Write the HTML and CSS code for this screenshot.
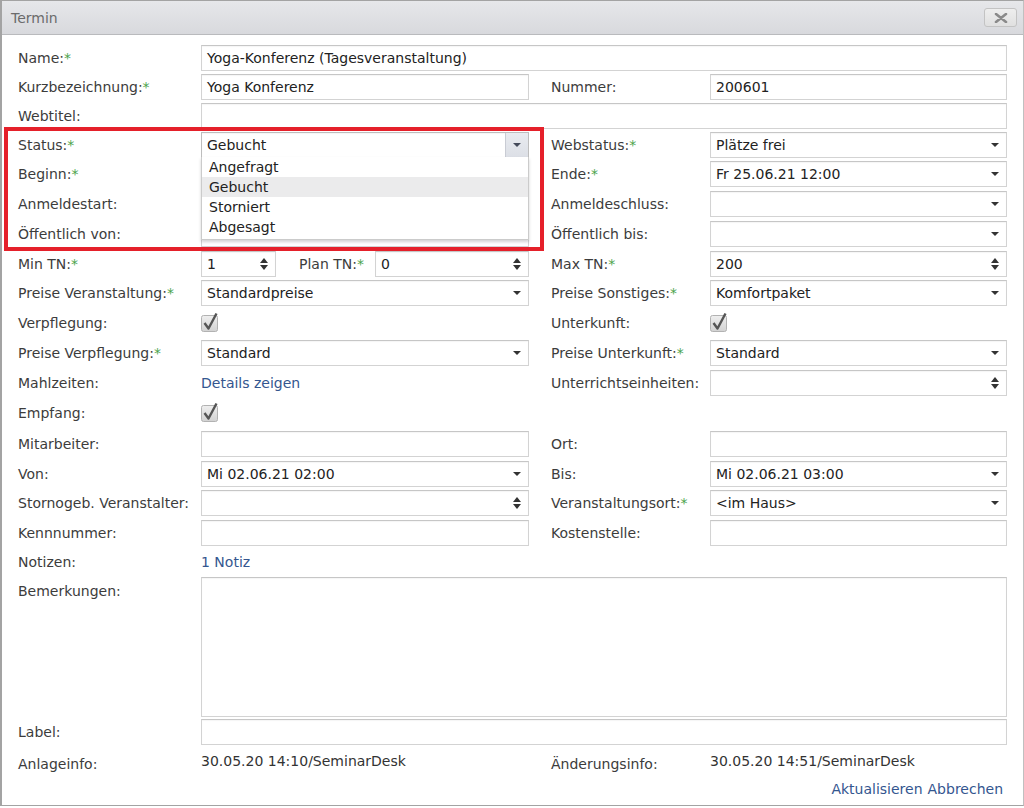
FILE: index.html
```html
<!DOCTYPE html>
<html lang="de">
<head>
<meta charset="utf-8">
<title>Termin</title>
<link rel="stylesheet" href="styles.css">
</head>
<body>
<div class="dialog">
  <div class="titlebar">
    <span class="title">Termin</span>
    <button class="close" type="button" aria-label="Schließen">
      <svg width="14" height="10" viewBox="0 0 14 10"><path d="M2 1 L12 9 M12 1 L2 9" stroke="#8a8a8a" stroke-width="2.6" stroke-linecap="round"/></svg>
    </button>
  </div>

  <div class="form">
    <!-- Name -->
    <div class="lbl">Name:<span class="req">*</span></div>
    <div class="fld span3"><div class="inp">Yoga-Konferenz (Tagesveranstaltung)</div></div>

    <!-- Kurzbezeichnung -->
    <div class="lbl">Kurzbezeichnung:<span class="req">*</span></div>
    <div class="fld"><div class="inp">Yoga Konferenz</div></div>
    <div class="lbl r">Nummer:</div>
    <div class="fld"><div class="inp">200601</div></div>

    <!-- Webtitel -->
    <div class="lbl">Webtitel:</div>
    <div class="fld span3"><div class="inp"></div></div>

    <!-- Status -->
    <div class="lbl">Status:<span class="req">*</span></div>
    <div class="fld status">
      <div class="inp sel open">Gebucht<span class="btn"><i class="arr"></i></span></div>
      <ul class="dropdown">
        <li>Angefragt</li>
        <li class="hover">Gebucht</li>
        <li>Storniert</li>
        <li>Abgesagt</li>
      </ul>
    </div>
    <div class="lbl r">Webstatus:<span class="req">*</span></div>
    <div class="fld"><div class="inp sel">Plätze frei<i class="arr"></i></div></div>

    <!-- Beginn -->
    <div class="lbl">Beginn:<span class="req">*</span></div>
    <div class="fld"><div class="inp sel"><i class="arr"></i></div></div>
    <div class="lbl r">Ende:<span class="req">*</span></div>
    <div class="fld"><div class="inp sel">Fr 25.06.21 12:00<i class="arr"></i></div></div>

    <!-- Anmeldestart -->
    <div class="lbl">Anmeldestart:</div>
    <div class="fld"><div class="inp sel"><i class="arr"></i></div></div>
    <div class="lbl r">Anmeldeschluss:</div>
    <div class="fld"><div class="inp sel"><i class="arr"></i></div></div>

    <!-- Öffentlich -->
    <div class="lbl">Öffentlich von:</div>
    <div class="fld"><div class="inp sel"><i class="arr"></i></div></div>
    <div class="lbl r">Öffentlich bis:</div>
    <div class="fld"><div class="inp sel"><i class="arr"></i></div></div>

    <!-- TN -->
    <div class="lbl">Min TN:<span class="req">*</span></div>
    <div class="fld tn">
      <div class="inp spin min">1<i class="spn"></i></div>
      <div class="sublbl">Plan TN:<span class="req">*</span></div>
      <div class="inp spin plan">0<i class="spn"></i></div>
    </div>
    <div class="lbl r">Max TN:<span class="req">*</span></div>
    <div class="fld"><div class="inp spin">200<i class="spn"></i></div></div>

    <!-- Preise -->
    <div class="lbl">Preise Veranstaltung:<span class="req">*</span></div>
    <div class="fld"><div class="inp sel">Standardpreise<i class="arr"></i></div></div>
    <div class="lbl r">Preise Sonstiges:<span class="req">*</span></div>
    <div class="fld"><div class="inp sel">Komfortpaket<i class="arr"></i></div></div>

    <!-- Verpflegung -->
    <div class="lbl">Verpflegung:</div>
    <div class="fld"><svg class="chk" width="18" height="20" viewBox="0 0 18 20"><defs><linearGradient id="cg1" x1="0" y1="0" x2="0" y2="1"><stop offset="0" stop-color="#efefef"/><stop offset="1" stop-color="#d2d2d2"/></linearGradient></defs><rect x="0.5" y="3.5" width="16" height="16" rx="2" fill="url(#cg1)" stroke="#b2b2b2"/><path d="M3.5 11 L7.5 16.5 L15.5 1.5" fill="none" stroke="#555" stroke-width="2.4" stroke-linejoin="round"/></svg></div>
    <div class="lbl r">Unterkunft:</div>
    <div class="fld"><svg class="chk" width="18" height="20" viewBox="0 0 18 20"><rect x="0.5" y="3.5" width="16" height="16" rx="2" fill="url(#cg1)" stroke="#b2b2b2"/><path d="M3.5 11 L7.5 16.5 L15.5 1.5" fill="none" stroke="#555" stroke-width="2.4" stroke-linejoin="round"/></svg></div>

    <!-- Preise Verpflegung -->
    <div class="lbl">Preise Verpflegung:<span class="req">*</span></div>
    <div class="fld"><div class="inp sel">Standard<i class="arr"></i></div></div>
    <div class="lbl r">Preise Unterkunft:<span class="req">*</span></div>
    <div class="fld"><div class="inp sel">Standard<i class="arr"></i></div></div>

    <!-- Mahlzeiten -->
    <div class="lbl">Mahlzeiten:</div>
    <div class="fld"><a class="link" href="#">Details zeigen</a></div>
    <div class="lbl r">Unterrichtseinheiten:</div>
    <div class="fld"><div class="inp spin"><i class="spn"></i></div></div>

    <!-- Empfang -->
    <div class="lbl">Empfang:</div>
    <div class="fld"><svg class="chk" width="18" height="20" viewBox="0 0 18 20"><rect x="0.5" y="3.5" width="16" height="16" rx="2" fill="url(#cg1)" stroke="#b2b2b2"/><path d="M3.5 11 L7.5 16.5 L15.5 1.5" fill="none" stroke="#555" stroke-width="2.4" stroke-linejoin="round"/></svg></div>
    <div></div><div></div>

    <!-- Mitarbeiter -->
    <div class="lbl">Mitarbeiter:</div>
    <div class="fld"><div class="inp"></div></div>
    <div class="lbl r">Ort:</div>
    <div class="fld"><div class="inp"></div></div>

    <!-- Von/Bis -->
    <div class="lbl">Von:</div>
    <div class="fld"><div class="inp sel">Mi 02.06.21 02:00<i class="arr"></i></div></div>
    <div class="lbl r">Bis:</div>
    <div class="fld"><div class="inp sel">Mi 02.06.21 03:00<i class="arr"></i></div></div>

    <!-- Storno -->
    <div class="lbl">Stornogeb. Veranstalter:</div>
    <div class="fld"><div class="inp spin"><i class="spn"></i></div></div>
    <div class="lbl r">Veranstaltungsort:<span class="req">*</span></div>
    <div class="fld"><div class="inp sel">&lt;im Haus&gt;<i class="arr"></i></div></div>

    <!-- Kennnummer -->
    <div class="lbl">Kennnummer:</div>
    <div class="fld"><div class="inp"></div></div>
    <div class="lbl r">Kostenstelle:</div>
    <div class="fld"><div class="inp"></div></div>

    <!-- Notizen -->
    <div class="lbl">Notizen:</div>
    <div class="fld"><a class="link" href="#">1 Notiz</a></div>
    <div></div><div></div>

    <!-- Bemerkungen -->
    <div class="lbl top">Bemerkungen:</div>
    <div class="fld span3 area"><div class="inp textarea"></div></div>

    <!-- Label -->
    <div class="lbl">Label:</div>
    <div class="fld span3"><div class="inp"></div></div>

    <!-- Info -->
    <div class="lbl info">Anlageinfo:</div>
    <div class="fld val">30.05.20 14:10/SeminarDesk</div>
    <div class="lbl r info">Änderungsinfo:</div>
    <div class="fld val">30.05.20 14:51/SeminarDesk</div>

    <!-- Buttons -->
    <div class="actions">
      <a class="link" href="#">Aktualisieren</a> <a class="link" href="#">Abbrechen</a>
    </div>
  </div>

  <div class="highlight"></div>
</div>
</body>
</html>
```

FILE: styles.css
```css
html, body {
  margin: 0;
  padding: 0;
  background: #ffffff;
}

body {
  font-family: "DejaVu Sans", Verdana, sans-serif;
  font-size: 14px;
  color: #3a3a3a;
}

.dialog {
  position: relative;
  width: 1021px;
  height: 804px;
  border: 1px solid #a3a3a3;
  border-left: 2px solid #a3a3a3;
  border-right: 1px solid #c0c0c0;
  background: #ffffff;
  overflow: hidden;
}

.titlebar {
  height: 33px;
  display: flex;
  align-items: center;
  justify-content: space-between;
  padding: 0 6px 0 9px;
  background: linear-gradient(#e6e7ea, #d8d9dd);
  border-bottom: 1px solid #b9babd;
}

.title {
  color: #6b6b6b;
  font-size: 14px;
}

.close {
  width: 33px;
  height: 19px;
  padding: 0;
  display: flex;
  align-items: center;
  justify-content: center;
  background: linear-gradient(#eeeeee, #e0e0e0);
  border: 1px solid #c3c3c3;
  border-radius: 3px;
}

.form {
  display: grid;
  grid-template-columns: 183px 328px 181px 297px;
  grid-template-rows: 29px 29px 29px 29px 30px 30px 30px 29px 30px 30px 30px 30px 30px 31px 29px 30px 30px 28px 141px 30px 30px 24px;
  padding: 8px 0 0 16px;
}

.lbl {
  display: flex;
  align-items: center;
  white-space: nowrap;
  color: #3c3c3c;
}

.lbl.r {
  padding-left: 22px;
}

.lbl.top {
  align-items: flex-start;
  padding-top: 7px;
}

.lbl.info {
  padding-top: 4px;
}

.req {
  color: #4ba34b;
}

.fld {
  display: flex;
  align-items: center;
  position: relative;
  min-width: 0;
}

.span3 {
  grid-column: 2 / 5;
}

.fld.val {
  color: #333;
  padding-bottom: 2px;
}

.inp {
  position: relative;
  box-sizing: border-box;
  width: 100%;
  height: 26px;
  border: 1px solid #d3d3d3;
  border-top-color: #c6c6c6;
  box-shadow: inset 0 1px 1px rgba(0, 0, 0, 0.04);
  background: #ffffff;
  padding: 0 24px 0 5px;
  display: flex;
  align-items: center;
  color: #222;
  white-space: nowrap;
  overflow: hidden;
}

.fld.area {
  align-items: flex-start;
}

.textarea {
  height: 140px;
  margin-top: 1px;
}

/* select arrow */
.arr {
  position: absolute;
  right: 7px;
  top: 50%;
  margin-top: -2px;
  width: 0;
  height: 0;
  border-left: 4px solid transparent;
  border-right: 4px solid transparent;
  border-top: 4px solid #333;
}

.sel.open {
  border-color: #bdbdbd;
  overflow: visible;
}

.sel.open .btn {
  position: absolute;
  right: 0;
  top: 0;
  bottom: 0;
  width: 22px;
  background: linear-gradient(#e9ebf0, #dcdfe6);
  border-left: 1px solid #c9ccd4;
}

.sel.open .btn .arr {
  right: 7px;
  border-top-color: #444a5a;
}

/* spinner */
.spn {
  position: absolute;
  right: 7px;
  top: 50%;
  width: 8px;
  height: 14px;
  margin-top: -7px;
}

.spn::before,
.spn::after {
  content: "";
  position: absolute;
  left: 0;
  width: 0;
  height: 0;
  border-left: 4px solid transparent;
  border-right: 4px solid transparent;
}

.spn::before {
  top: 1px;
  border-bottom: 5px solid #333;
}

.spn::after {
  bottom: 1px;
  border-top: 5px solid #333;
}

.spin.min {
  width: 75px;
  flex: none;
}

.sublbl {
  width: 99px;
  flex: none;
  padding-left: 23px;
  box-sizing: border-box;
  white-space: nowrap;
  color: #3c3c3c;
}

.spin.plan {
  flex: 1;
}

/* checkbox */
.chk {
  display: block;
  margin-top: -2px;
}

.link {
  color: #34568f;
  text-decoration: none;
}

.actions {
  grid-column: 1 / 5;
  display: flex;
  justify-content: flex-end;
  align-items: center;
  gap: 5px;
  padding-right: 4px;
}

/* dropdown list */
.dropdown {
  position: absolute;
  z-index: 5;
  left: 0;
  right: 0;
  top: 27px;
  margin: 0;
  padding: 0 0 2px 0;
  list-style: none;
  background: #ffffff;
  border: 1px solid #cbcbcb;
  border-top: none;
  box-shadow: 0 2px 3px rgba(0, 0, 0, 0.18);
}

.dropdown li {
  height: 20px;
  line-height: 20px;
  padding-left: 7px;
  color: #222;
}

.dropdown li.hover {
  background: #ebebec;
}

/* annotation rectangle */
.highlight {
  position: absolute;
  z-index: 10;
  left: 2px;
  top: 126px;
  width: 532px;
  height: 116px;
  border: 4px solid #e5202a;
  pointer-events: none;
}
```
